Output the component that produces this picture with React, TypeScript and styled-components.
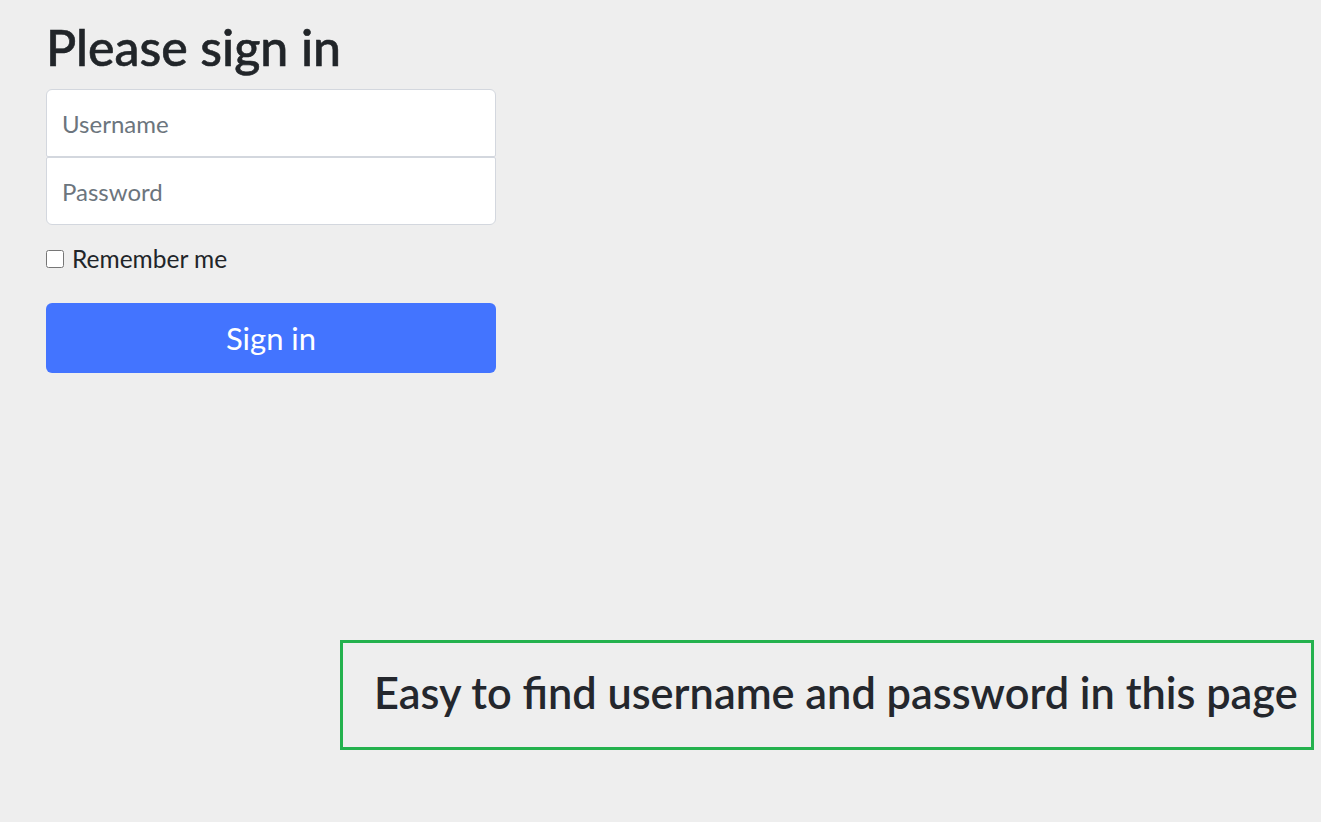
import styled, { createGlobalStyle } from 'styled-components';

const GlobalStyle = createGlobalStyle`
  html, body { margin: 0; padding: 0; background: #eeeeee; }
  body { font-family: Lato, 'Noto Sans', sans-serif; color: #212529; }
  * { box-sizing: border-box; }
`;

const Page = styled.div`
  display: flex;
  flex-direction: column;
  min-height: 822px;
  padding: 17px 7px 0 46px;
`;

const Form = styled.form`
  display: flex;
  flex-direction: column;
  width: 450px;
`;

const Title = styled.h1`
  margin: 0 0 12px;
  font-size: 50px;
  font-weight: 500;
  line-height: 60px;
  color: #212529;
  -webkit-text-stroke: 0.6px #212529;
`;

const Input = styled.input<{ $pos: 'top' | 'bottom' }>`
  height: 68px;
  width: 100%;
  padding: 0 15px;
  font-family: inherit;
  font-size: 24px;
  color: #212529;
  background: #fff;
  border: 1px solid #d3d7de;
  border-radius: ${(p) => (p.$pos === 'top' ? '6px 6px 2px 2px' : '2px 2px 6px 6px')};
  outline: none;
  &::placeholder { color: #6c757d; }
`;

const CheckRow = styled.label`
  display: flex;
  align-items: center;
  gap: 8px;
  margin: 22px 0 32px;
  font-size: 24.5px;
  line-height: 24px;
`;

const Check = styled.input`
  width: 18px;
  height: 18px;
  margin: 0;
`;

const Button = styled.button`
  height: 70px;
  width: 100%;
  border: none;
  border-radius: 6px;
  background: #4374ff;
  color: #fff;
  font-family: inherit;
  font-size: 31px;
  cursor: pointer;
`;

const Notice = styled.div`
  align-self: flex-end;
  width: 974px;
  height: 110px;
  margin-top: 267px;
  border: 3px solid #23b14d;
  display: flex;
  align-items: center;
  padding: 0 0 6px 31px;
  font-size: 43.3px;
  font-weight: 600;
  color: #24272d;
`;

export default function App() {
  return (
    <>
      <GlobalStyle />
      <Page>
        <Form onSubmit={(e) => e.preventDefault()}>
          <Title>Please sign in</Title>
          <Input $pos="top" type="text" placeholder="Username" />
          <Input $pos="bottom" type="password" placeholder="Password" />
          <CheckRow>
            <Check type="checkbox" />
            Remember me
          </CheckRow>
          <Button type="submit">Sign in</Button>
        </Form>
        <Notice>Easy to find username and password in this page</Notice>
      </Page>
    </>
  );
}
